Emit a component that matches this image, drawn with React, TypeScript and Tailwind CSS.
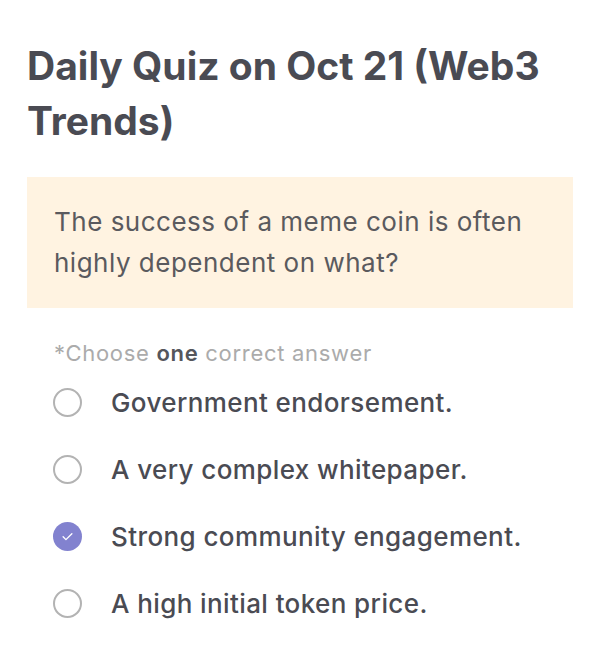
import React from 'react';

const options = [
  { label: 'Government endorsement.', checked: false },
  { label: 'A very complex whitepaper.', checked: false },
  { label: 'Strong community engagement.', checked: true },
  { label: 'A high initial token price.', checked: false },
];

const Radio: React.FC<{ checked: boolean }> = ({ checked }) =>
  checked ? (
    <span className="flex h-[29px] w-[29px] items-center justify-center rounded-full bg-[#8282cf]">
      <svg width="15" height="15" viewBox="0 0 24 24" fill="none" stroke="white" strokeWidth="2.2" strokeLinecap="round" strokeLinejoin="round">
        <path d="M5 12.5l4.5 4.5L19 7.5" />
      </svg>
    </span>
  ) : (
    <span className="block h-[29px] w-[29px] rounded-full border-[2.5px] border-[#b3b3b3]" />
  );

export default function App() {
  return (
    <div className="min-h-[669px] w-[600px] bg-white px-[27px] pt-[38px]" style={{ fontFamily: 'Inter, "Noto Sans", sans-serif' }}>
      <h1 className="text-[39px] font-bold leading-[55px] text-[#4a4b53]">
        Daily Quiz on Oct 21 (Web3 Trends)
      </h1>

      <div className="mt-[29px] bg-[#fff3e1] px-[27px] pb-[25px] pt-[24px]">
        <p className="text-[26px] font-normal leading-[41px] tracking-[0.5px] text-[#5a5a5e]">
          The success of a meme coin is often highly dependent on what?
        </p>
      </div>

      <p className="mt-[30px] pl-[27px] text-[22px] leading-[30px] tracking-[0.7px] text-[#ababab]">
        *Choose <span className="font-semibold text-[#55565c]">one</span> correct answer
      </p>

      <ul className="mt-[1px] flex flex-col">
        {options.map((o) => (
          <li key={o.label} className="flex h-[67px] items-center pl-[26px]">
            <Radio checked={o.checked} />
            <span className="ml-[29px] text-[26px] font-medium tracking-[0.4px] text-[#4a4b53]">{o.label}</span>
          </li>
        ))}
      </ul>
    </div>
  );
}
